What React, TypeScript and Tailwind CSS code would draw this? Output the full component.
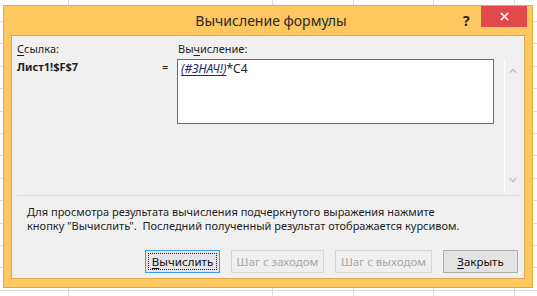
import { ChevronDown, ChevronUp, X } from "lucide-react";

const gridCols = [68, 272, 353, 433, 514];
const gridRows = Array.from({ length: 13 }, (_, index) => 21 + index * 22.4);

function SheetGrid() {
  return (
    <div className="absolute inset-0">
      {gridCols.map((x) => (
        <div key={`c${x}`} className="absolute top-0 bottom-0 w-px bg-[#dadada]" style={{ left: x }} />
      ))}
      {gridRows.map((y) => (
        <div key={`r${y}`} className="absolute left-0 right-0 h-px bg-[#dadada]" style={{ top: Math.round(y) }} />
      ))}
    </div>
  );
}

function DialogButton({
  children,
  width,
  variant
}: {
  children: React.ReactNode;
  width: string;
  variant: "focused" | "disabled" | "normal";
}) {
  if (variant === "focused") {
    return (
      <button type="button" className={`${width} h-[23px] border border-[#3c9bf0] bg-[#e5e5e5] p-[2px]`}>
        <span className="flex h-full w-full items-center justify-center border border-dotted border-[#222] text-[11.5px] text-[#111]">
          {children}
        </span>
      </button>
    );
  }
  if (variant === "disabled") {
    return (
      <button
        type="button"
        className={`${width} h-[23px] border border-[#d6d6d6] bg-[#efefef] text-[11.5px] text-[#a6a6a6]`}
      >
        {children}
      </button>
    );
  }
  return (
    <button type="button" className={`${width} h-[23px] border border-[#acacac] bg-[#e3e3e3] text-[11.5px] text-[#111]`}>
      {children}
    </button>
  );
}

export default function App() {
  return (
    <div className="relative h-[296px] w-[537px] overflow-hidden bg-white font-['Noto_Sans',sans-serif]">
      <SheetGrid />

      <div className="absolute left-[3px] top-[5px] flex h-[283px] w-[530px] flex-col border border-[#e2a940] bg-[#fec760]">
        <div className="relative flex h-[29px] shrink-0 items-center justify-center">
          <span className="pl-[6px] text-[14px] text-[#2a2a2a]">Вычисление формулы</span>
          <span className="absolute left-[459px] top-[4px] text-[14px] font-bold text-[#222]">?</span>
          <div className="absolute left-[477px] top-0 flex h-[21px] w-[46px] items-center justify-center bg-[#e3484b]">
            <X size={13} strokeWidth={3} className="text-white" />
          </div>
        </div>

        <div className="mx-[7px] mb-[8px] flex flex-1 flex-col border border-[#e0aa4c] bg-[#f0f0f0] pl-[5px] pr-[3px] pt-[5px] text-[11px] text-[#1e1e1e]">
          <div className="flex">
            <div className="w-[145px] shrink-0">
              <div className="leading-[16px]">
                <span className="underline underline-offset-2">С</span>сылка:
              </div>
              <div className="mt-[2px] font-bold leading-[16px]">Лист1!$F$7</div>
            </div>
            <div className="w-[15px] shrink-0 pt-[18px] leading-[16px]">=</div>
            <div className="flex flex-col">
              <div className="pl-px leading-[16px]">
                Вы<span className="underline underline-offset-2">ч</span>исление:
              </div>
              <div className="mt-[2px] flex h-[134px]">
                <div className="w-[327px]">
                  <div className="h-[65px] w-[317px] border border-[#6b6b6b] bg-white px-[3px] text-[12px] leading-[17px]">
                    <span className="italic text-[#1b2a66] underline underline-offset-2">(#ЗНАЧ!)</span>*C4
                  </div>
                </div>
                <div className="flex w-[17px] flex-col items-center justify-between border-l border-white pb-[7px] pt-[6px]">
                  <ChevronUp size={12} strokeWidth={2.5} className="text-[#c2c2c2]" />
                  <ChevronDown size={12} strokeWidth={2.5} className="text-[#c2c2c2]" />
                </div>
              </div>
            </div>
          </div>

          <div className="mt-[2px] h-px w-[504px] bg-[#dcdcdc]" />

          <p className="mt-[9px] pl-[10px] leading-[14px] whitespace-pre">
            {"Для просмотра результата вычисления подчеркнутого выражения нажмите\nкнопку \"Вычислить\".  Последний полученный результат отображается курсивом."}
          </p>

          <div className="mt-auto mb-[5px] flex justify-end gap-[11px] pr-[3px]">
            <DialogButton width="w-[75px]" variant="focused">
              <span className="underline underline-offset-2">В</span>ычислить
            </DialogButton>
            <DialogButton width="w-[93px]" variant="disabled">
              Шаг с заходом
            </DialogButton>
            <DialogButton width="w-[97px]" variant="disabled">
              Шаг с выходом
            </DialogButton>
            <DialogButton width="w-[75px]" variant="normal">
              <span className="underline underline-offset-2">З</span>акрыть
            </DialogButton>
          </div>
        </div>
      </div>
    </div>
  );
}
